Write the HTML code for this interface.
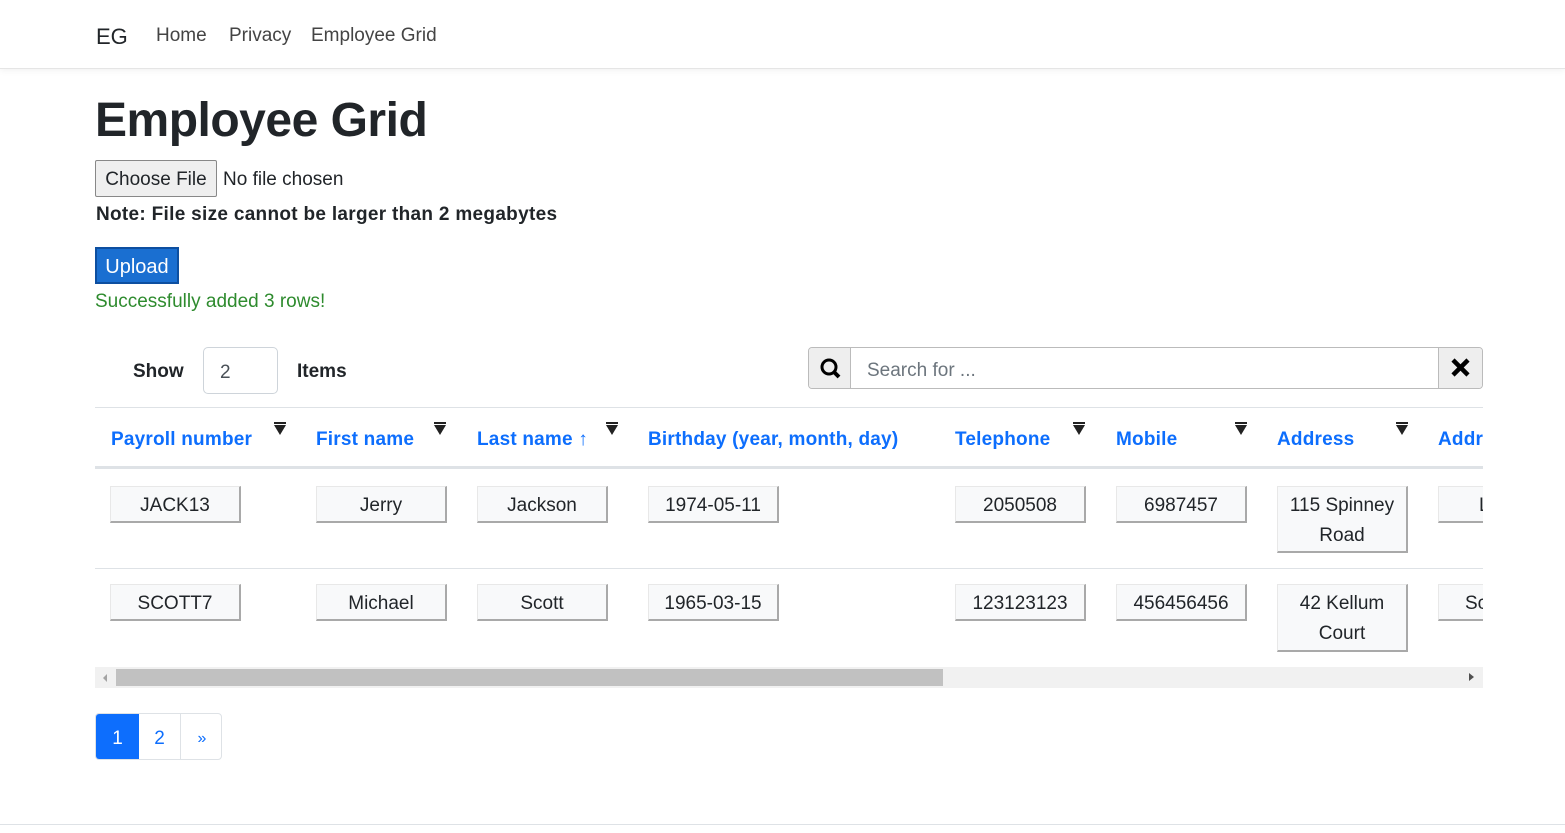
<!DOCTYPE html>
<html><head><meta charset="utf-8"><style>
*{box-sizing:border-box;margin:0;padding:0}
body{width:1565px;height:833px;overflow:hidden;background:#fff;font-family:"Liberation Sans",sans-serif;color:#212529;position:relative}
.a{position:absolute;white-space:nowrap}
nav{position:absolute;left:0;top:0;width:1565px;height:69px;border-bottom:1px solid #e5e5e5;box-shadow:0 2px 6px rgba(0,0,0,.05)}
.hd{color:#0d6efd;font-weight:bold;font-size:19px;top:429px;letter-spacing:.2px}
.f{top:425px;width:0;height:0;border-left:6px solid transparent;border-right:6px solid transparent;border-top:10px solid #222}
.f:before{content:"";position:absolute;left:-6px;top:-13px;width:12px;height:2px;background:#222}
.c{position:absolute;width:131px;height:37px;background:#f8f9fa;border-right:2px solid #a9a9a9;border-bottom:2px solid #a9a9a9;border-top:1px solid #e8e8e8;border-left:1px solid #e8e8e8;font-size:19px;text-align:center;line-height:38px;overflow:hidden;white-space:nowrap}
.t{line-height:30px;padding-top:4px;white-space:normal}
</style></head><body>
<nav>
<div class="a" style="left:96px;top:24px;font-size:22px">EG</div>
<div class="a" style="left:156px;top:25px;font-size:19px;color:#444">Home</div>
<div class="a" style="left:229px;top:25px;font-size:19px;color:#444">Privacy</div>
<div class="a" style="left:311px;top:25px;font-size:19px;color:#444">Employee Grid</div>
</nav>
<div class="a" style="left:95px;top:93px;font-size:48px;font-weight:bold;letter-spacing:-0.5px">Employee Grid</div>
<div class="a" style="left:95px;top:160px;width:122px;height:37px;border:1px solid #888;border-radius:2px;background:#efefef;font-size:19px;line-height:38px;text-align:center">Choose File</div>
<div class="a" style="left:223px;top:169px;font-size:19px">No file chosen</div>
<div class="a" style="left:96px;top:204px;font-size:19px;font-weight:bold;letter-spacing:.3px">Note: File size cannot be larger than 2 megabytes</div>
<div class="a" style="left:95px;top:247px;width:84px;height:37px;background:#1a6fd1;border:2px solid #0d4fa0;color:#fff;font-size:20px;line-height:37px;text-align:center">Upload</div>
<div class="a" style="left:95px;top:291px;font-size:19px;color:#2e8b2e">Successfully added 3 rows!</div>
<div class="a" style="left:133px;top:361px;font-size:19px;font-weight:bold">Show</div>
<div class="a" style="left:203px;top:347px;width:75px;height:47px;border:1px solid #ced4da;border-radius:5px;font-size:19px;line-height:50px;padding-left:16px;color:#495057">2</div>
<div class="a" style="left:297px;top:361px;font-size:19px;font-weight:bold">Items</div>
<div class="a" style="left:808px;top:347px;width:675px;height:42px;border:1px solid #bbb;border-radius:4px;overflow:hidden">
<div class="a" style="left:0;top:0;width:42px;height:40px;background:#eee;border-right:1px solid #bbb"><svg width="42" height="40"><circle cx="20" cy="19" r="7" fill="none" stroke="#000" stroke-width="3"/><line x1="25" y1="24" x2="30" y2="29" stroke="#000" stroke-width="4"/></svg></div>
<div class="a" style="left:58px;top:12px;font-size:19px;color:#6c757d">Search for ...</div>
<div class="a" style="left:629px;top:0;width:45px;height:40px;background:#eee;border-left:1px solid #bbb"><svg width="45" height="40"><path d="M14 12L29 27M29 12L14 27" stroke="#000" stroke-width="4.5"/></svg></div>
</div>
<div class="a" style="left:95px;top:407px;width:1388px;height:1px;background:#dee2e6"></div>
<div class="a hd" style="left:111px">Payroll number</div><div class="a f" style="left:274px"></div>
<div class="a hd" style="left:316px">First name</div><div class="a f" style="left:434px"></div>
<div class="a hd" style="left:477px">Last name ↑</div><div class="a f" style="left:606px"></div>
<div class="a hd" style="left:648px">Birthday (year, month, day)</div>
<div class="a hd" style="left:955px">Telephone</div><div class="a f" style="left:1073px"></div>
<div class="a hd" style="left:1116px">Mobile</div><div class="a f" style="left:1235px"></div>
<div class="a hd" style="left:1277px">Address</div><div class="a f" style="left:1396px"></div>
<div class="a" style="left:1438px;top:429px;width:45px;overflow:hidden"><span class="hd" style="position:static">Address</span></div>
<div class="a" style="left:95px;top:466px;width:1388px;height:3px;background:#dee2e6"></div>
<div class="a" style="left:95px;top:568px;width:1388px;height:1px;background:#dee2e6"></div>
<div class="c" style="left:110px;top:486px">JACK13</div>
<div class="c" style="left:316px;top:486px">Jerry</div>
<div class="c" style="left:477px;top:486px">Jackson</div>
<div class="c" style="left:648px;top:486px">1974-05-11</div>
<div class="c" style="left:955px;top:486px">2050508</div>
<div class="c" style="left:1116px;top:486px">6987457</div>
<div class="c t" style="left:1277px;top:486px;height:67px">115 Spinney Road</div>
<div class="c" style="left:110px;top:584px">SCOTT7</div>
<div class="c" style="left:316px;top:584px">Michael</div>
<div class="c" style="left:477px;top:584px">Scott</div>
<div class="c" style="left:648px;top:584px">1965-03-15</div>
<div class="c" style="left:955px;top:584px">123123123</div>
<div class="c" style="left:1116px;top:584px">456456456</div>
<div class="c t" style="left:1277px;top:584px;height:68px">42 Kellum Court</div>
<div class="a" style="left:1438px;top:486px;width:45px;height:37px;overflow:hidden"><div class="c" style="left:0;top:0;text-align:left;padding-left:40px">Lo</div></div>
<div class="a" style="left:1438px;top:584px;width:45px;height:37px;overflow:hidden"><div class="c" style="left:0;top:0;text-align:left;padding-left:26px">Sc</div></div>
<div class="a" style="left:95px;top:667px;width:1388px;height:21px;background:#f1f1f1">
<div class="a" style="left:21px;top:2px;width:827px;height:17px;background:#c1c1c1"></div>
<div class="a" style="left:8px;top:7px;border-right:4px solid #a3a3a3;border-top:4px solid transparent;border-bottom:4px solid transparent"></div>
<div class="a" style="left:1374px;top:6px;border-left:5px solid #505050;border-top:4px solid transparent;border-bottom:4px solid transparent"></div>
</div>
<div class="a" style="left:95px;top:713px;width:127px;height:47px;border:1px solid #dee2e6;border-radius:4px;overflow:hidden;font-size:19px">
<div class="a" style="left:0;top:0;width:43px;height:47px;background:#0d6efd;color:#fff;text-align:center;line-height:49px">1</div>
<div class="a" style="left:43px;top:0;width:42px;height:47px;color:#0d6efd;text-align:center;line-height:49px;border-right:1px solid #dee2e6">2</div>
<div class="a" style="left:85px;top:0;width:42px;height:47px;color:#0d6efd;text-align:center;line-height:49px;font-size:16px">»</div>
</div>
<div class="a" style="left:0;top:824px;width:1565px;height:1px;background:#dee2e6"></div>
</body></html>
